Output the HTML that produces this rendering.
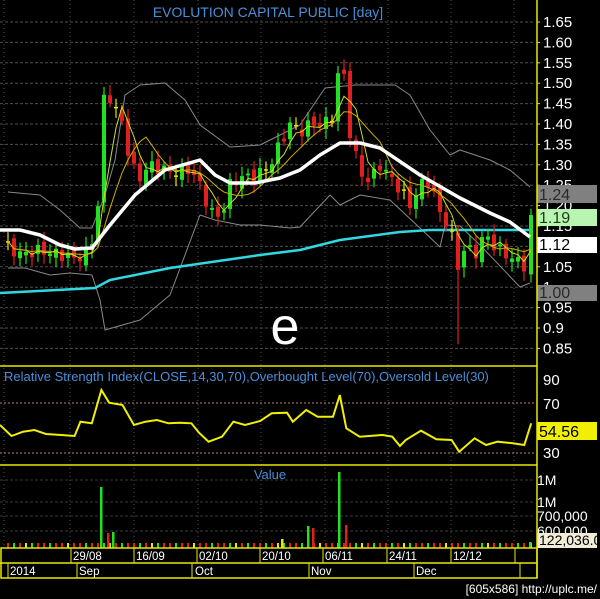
<!DOCTYPE html>
<html><head><meta charset="utf-8"><style>
html,body{margin:0;padding:0;background:#000;width:600px;height:599px;overflow:hidden}
svg{display:block}
text{font-family:"Liberation Sans",sans-serif}
</style></head><body>
<svg id="s" width="600" height="599" xmlns="http://www.w3.org/2000/svg">
<rect width="600" height="599" fill="#000"/>
<g id="grid"></g>
<g id="bands" fill="none"></g>
<g id="candles"></g>
<g id="mas" fill="none"></g>
<text x="268" y="17" fill="#4a8fd8" font-size="14" text-anchor="middle">EVOLUTION CAPITAL PUBLIC [day]</text>
<text x="285" y="344" fill="#fff" font-size="52" text-anchor="middle">e</text>
<g id="axis" fill="#fff" font-size="15"></g>
<line x1="537" y1="0" x2="537" y2="578" stroke="#e8e800" stroke-width="1.5"/>
<line x1="0" y1="366" x2="537" y2="366" stroke="#e8e800" stroke-width="1.5"/>
<line x1="0" y1="465" x2="537" y2="465" stroke="#e8e800" stroke-width="1.5"/>
<line x1="0" y1="403" x2="535" y2="403" stroke="#c08080" stroke-dasharray="2,2"/>
<line x1="0" y1="453" x2="535" y2="453" stroke="#c08080" stroke-dasharray="2,2"/>
<text x="4" y="381" fill="#4a8fd8" font-size="13">Relative Strength Index(CLOSE,14,30,70),Overbought Level(70),Oversold Level(30)</text>
<polyline id="rsi" fill="none" stroke="#f0f000" stroke-width="2"/>
<g id="vol"></g>
<text x="270" y="479" fill="#4a8fd8" font-size="13" text-anchor="middle">Value</text>
<g id="dates" font-size="11.5" fill="#fff"></g>
<text x="597" y="593" fill="#fff" font-size="12" text-anchor="end" font-family="Liberation Mono,monospace">[605x586] http://uplc.me/</text>
</svg>
<script>
var NS="http://www.w3.org/2000/svg";
function el(p,t,a,txt){var e=document.createElementNS(NS,t);for(var k in a)e.setAttribute(k,a[k]);if(txt!=null)e.textContent=txt;document.getElementById(p).appendChild(e);return e;}
function Y(p){return 22+(1.65-p)*408;}
for(var p=1.65;p>0.84;p-=0.05){var y=Y(p);el("grid","line",{x1:0,y1:y,x2:535,y2:y,stroke:"#505050","stroke-dasharray":"3,2"});}
[4,70,134,198,261,325,388,451,514].forEach(function(x){el("grid","line",{x1:x,y1:0,x2:x,y2:548,stroke:"#505050","stroke-dasharray":"1,3"});});
[480,502,516,531].forEach(function(y){el("grid","line",{x1:0,y1:y,x2:535,y2:y,stroke:"#3a3a3a","stroke-dasharray":"3,2"});});
function pl(pts,c,w){el("bands","polyline",{points:pts.map(function(a){return a.join(",")}).join(" "),stroke:c,"stroke-width":w,"stroke-linejoin":"round"});}
pl([[8,192],[40,195],[60,210],[80,228],[92,228],[105,195],[115,160],[125,95],[140,85],[165,83],[185,100],[200,125],[230,147],[260,145],[280,135],[300,125],[325,88],[355,85],[395,85],[410,95],[430,130],[450,155],[460,150],[490,160],[510,170],[530,187]],"#888",1);
pl([[8,268],[25,268],[50,275],[70,273],[92,275],[100,300],[105,330],[140,320],[170,295],[200,215],[215,220],[240,225],[260,225],[290,228],[300,227],[330,195],[340,205],[360,195],[390,200],[420,228],[440,247],[445,225],[460,226],[480,245],[520,287],[530,283]],"#888",1);
pl([[0,293],[95,288],[110,280],[170,268],[260,255],[300,250],[340,240],[400,232],[430,230],[530,230]],"#30d8e0",2.5);
var K=[[8,1.10],[20,1.08],[40,1.09],[60,1.08],[75,1.07],[85,1.08],[93,1.12],[98,1.20],[102,1.42],[106,1.50],[112,1.45],[118,1.42],[124,1.40],[130,1.30],[140,1.27],[150,1.30],[160,1.29],[175,1.28],[190,1.29],[200,1.25],[208,1.20],[215,1.17],[222,1.18],[230,1.25],[240,1.27],[255,1.27],[270,1.30],[280,1.35],[290,1.40],[300,1.38],[310,1.40],[325,1.40],[335,1.43],[340,1.58],[345,1.50],[350,1.38],[360,1.28],[370,1.26],[380,1.30],[390,1.27],[400,1.24],[410,1.20],[420,1.25],[430,1.26],[440,1.18],[450,1.15],[458,1.05],[465,1.10],[475,1.08],[485,1.13],[495,1.10],[505,1.08],[515,1.07],[522,1.05],[528,1.06],[531,1.19]];
function interp(x){for(var i=0;i<K.length-1;i++){if(x<=K[i+1][0]){var t=(x-K[i][0])/(K[i+1][0]-K[i][0]);return K[i][1]+t*(K[i+1][1]-K[i][1]);}}return K[K.length-1][1];}
var xs=[],cl=[],prev=1.10;
for(var x=8;x<=531;x+=6){if(x>528)x=531;var c=interp(x)+0.015*Math.sin(x*1.7);xs.push(x);cl.push(c);
var o=prev+0.01*Math.cos(x*2.3),hi=Math.max(o,c)+0.01+0.015*Math.abs(Math.sin(x*.9)),lo=Math.min(o,c)-0.01-0.015*Math.abs(Math.cos(x*1.3));
if(x==340)hi=1.65;if(x==458||x==459)lo=0.86;
var col=Math.abs(c-o)<0.004?"#e8e800":(c>o?"#22e022":"#e02020");
el("candles","line",{x1:x,y1:Y(hi),x2:x,y2:Y(lo),stroke:col,"stroke-width":1.2});
var t=Y(Math.max(o,c)),b=Y(Math.min(o,c));el("candles","rect",{x:x-2,y:t,width:4,height:Math.max(1.5,b-t),fill:col});
prev=c;}
function ma(n){return cl.map(function(v,i){var s=0,k=0;for(var j=Math.max(0,i-n+1);j<=i;j++){s+=cl[j];k++;}return xs[i]+","+Y(s/k);}).join(" ");}
el("mas","polyline",{points:ma(4),stroke:"#c8e020","stroke-width":1});
el("mas","polyline",{points:ma(8),stroke:"#d0b000","stroke-width":1});
el("mas","polyline",{points:"0,230 20,230 40,235 60,245 75,249 92,248 110,225 135,195 165,170 200,160 215,175 230,183 255,183 280,178 300,170 320,155 340,143 360,143 380,148 420,175 460,198 490,213 510,222 530,237",stroke:"#fff","stroke-width":3.5,"stroke-linejoin":"round"});
var labs=[["1.65",1.65],["1.60",1.6],["1.55",1.55],["1.50",1.5],["1.45",1.45],["1.40",1.4],["1.35",1.35],["1.30",1.3],["1.25",1.25],["1.20",1.2],["1.15",1.15],["1.05",1.05],["1",1.0],["0.95",0.95],["0.9",0.9],["0.85",0.85]];
labs.forEach(function(l){el("axis","text",{x:543,y:Y(l[1])+5},l[0]);el("axis","line",{x1:537,y1:Y(l[1]),x2:540,y2:Y(l[1]),stroke:"#e8e800"});});
function box(y,h,bg,fg,t,fs){el("axis","rect",{x:537,y:y,width:60,height:h,fill:bg});el("axis","text",{x:539,y:y+h-3,fill:fg,"font-size":fs||16},t);}
box(185,18,"#808080","#2a2a2a","1.24");box(209,17,"#b8f5b0","#1a3a1a","1.19");box(237,16,"#fff","#000","1.12");box(285,16,"#808080","#2a2a2a","1.00");
[["90",380],["70",404],["30",453]].forEach(function(l){el("axis","text",{x:543,y:l[1]+5},l[0]);});
box(422,18,"#f0f000","#000","54.56");
[["1M",480],["1M",502],["700,000",516],["600,000",531]].forEach(function(l){el("axis","text",{x:537,y:l[1]+5,"font-size":14},l[0]);});
box(533,15,"#f0ecd8","#000","122,036.0",14);
var R=[[0,195],[30,228],[60,215],[90,210],[120,222],[160,225],[195,228],[210,185],[240,190],[265,90],[285,128],[320,135],[350,195],[380,185],[410,180],[440,190],[470,188],[500,190],[520,218],[545,245],[580,230],[610,185],[640,195],[680,183],[710,160],[750,158],[765,185],[800,150],[830,170],[870,170],[888,105],[905,205],[940,230],[1000,225],[1025,230],[1045,258],[1060,240],[1100,212],[1140,238],[1180,240],[1200,275],[1240,235],[1270,255],[1300,245],[1340,250],[1370,255],[1388,190]];
document.getElementById("rsi").setAttribute("points",R.map(function(a){return (a[0]/2.613).toFixed(1)+","+(a[1]/3+360).toFixed(1)}).join(" "));
for(var i=0;i<xs.length;i++){var x=xs[i];var c=i%3==0?"#e02020":(i%3==1?"#22e022":"#e02020");if(i%7==3)c="#e8e800";el("vol","rect",{x:x-1,y:543,width:2,height:5,fill:c});}
[[101,487,"#22e022"],[108,533,"#e02020"],[113,532,"#22e022"],[282,539,"#e8e800"],[308,526,"#22e022"],[313,528,"#e02020"],[339,472,"#22e022"],[346,525,"#e02020"],[530,542,"#22e022"]].forEach(function(v){el("vol","rect",{x:v[0]-1,y:v[1],width:2.5,height:548-v[1],fill:v[2]});});
el("dates","rect",{x:1,y:548,width:536,height:30,fill:"none",stroke:"#e8e800","stroke-width":1.5});
el("dates","line",{x1:0,y1:563,x2:537,y2:563,stroke:"#e8e800","stroke-width":1.5});
[71,134,197,260,323,387,451,515].forEach(function(x){el("dates","line",{x1:x,y1:548,x2:x,y2:563,stroke:"#e8e800"});});
[8,77,192,309,414,520].forEach(function(x){el("dates","line",{x1:x,y1:563,x2:x,y2:578,stroke:"#e8e800"});});
[["29/08",73],["16/09",136],["02/10",199],["20/10",262],["06/11",325],["24/11",389],["12/12",453]].forEach(function(d){el("dates","text",{x:d[1],y:560},d[0]);});
[["2014",10],["Sep",79],["Oct",195],["Nov",311],["Dec",416]].forEach(function(d){el("dates","text",{x:d[1],y:575},d[0]);});
</script>
</body></html>
